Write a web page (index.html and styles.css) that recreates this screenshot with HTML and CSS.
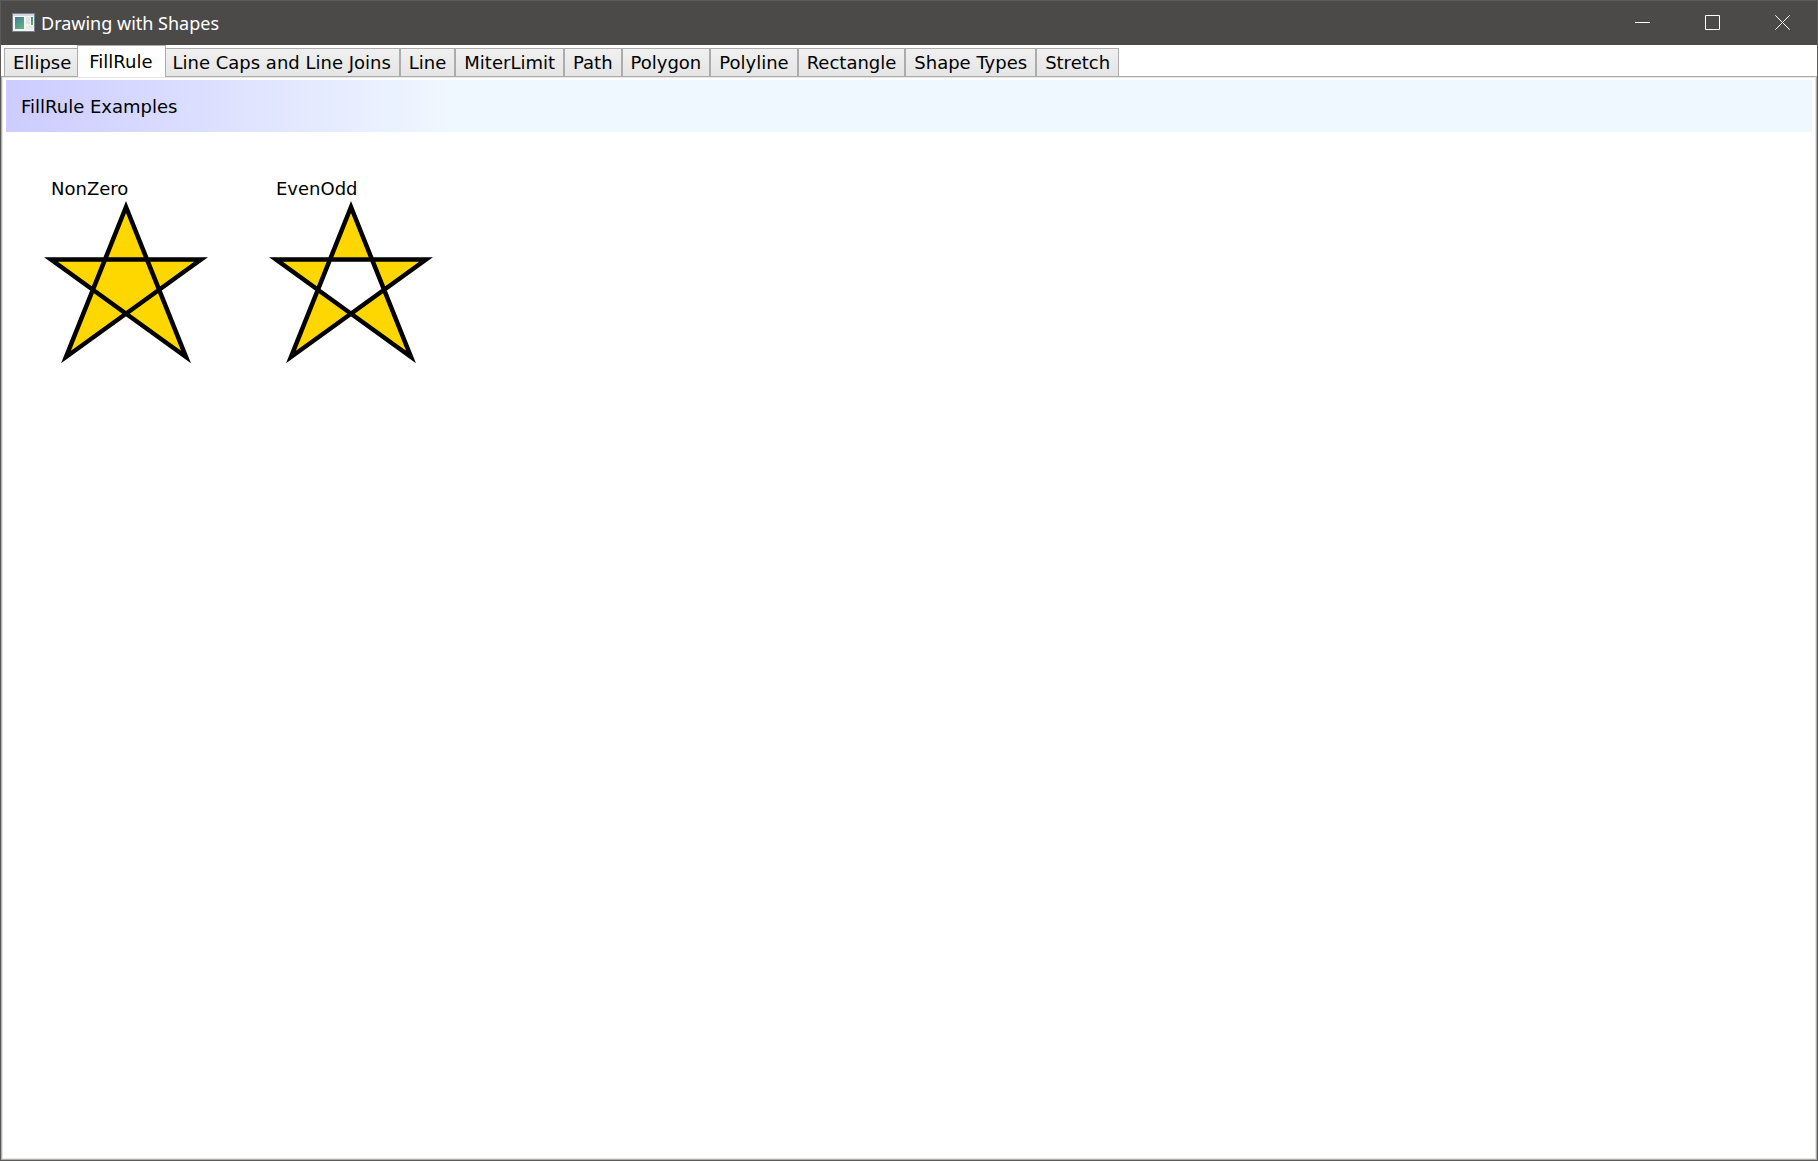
FILE: index.html
```html
<!DOCTYPE html>
<html lang="en">
<head>
<meta charset="utf-8">
<title>Drawing with Shapes</title>
<link rel="stylesheet" href="styles.css">
</head>
<body>
<div class="window">
  <header class="titlebar">
    <svg class="app-icon" width="23" height="19" viewBox="0 0 23 19" aria-hidden="true">
      <defs>
        <linearGradient id="pane" x1="0" y1="0" x2="0.6" y2="1">
          <stop offset="0" stop-color="#4177a0"/>
          <stop offset="1" stop-color="#5fb277"/>
        </linearGradient>
      </defs>
      <rect x="0.5" y="0.5" width="22" height="18" fill="#f4f4f5" stroke="#79818a"/>
      <rect x="1" y="1" width="21" height="2" fill="#d5d9df"/>
      <rect x="3" y="4" width="9" height="12" fill="url(#pane)"/>
      <rect x="14" y="4" width="4" height="7" fill="#e4e4e4"/>
      <rect x="19" y="4" width="2" height="8" fill="url(#pane)"/>
      <rect x="14" y="13" width="7" height="3" fill="#e9e9e9"/>
    </svg>
    <h1 class="title">Drawing with Shapes</h1>
    <div class="controls">
      <button class="control" type="button" aria-label="Minimize"><svg width="15" height="15" viewBox="0 0 15 15"><path d="M0 7.5H15"/></svg></button>
      <button class="control" type="button" aria-label="Maximize"><svg width="15" height="15" viewBox="0 0 15 15"><path d="M0.5 0.5H14.5V14.5H0.5Z"/></svg></button>
      <button class="control" type="button" aria-label="Close"><svg width="15" height="15" viewBox="0 0 15 15"><path d="M0.3 0.3L14.7 14.7M14.7 0.3L0.3 14.7"/></svg></button>
    </div>
  </header>
  <div class="tabs" role="tablist">
    <button class="tab" role="tab" type="button">Ellipse</button>
    <button class="tab selected" role="tab" type="button" aria-selected="true">FillRule</button>
    <button class="tab" role="tab" type="button">Line Caps and Line Joins</button>
    <button class="tab" role="tab" type="button">Line</button>
    <button class="tab" role="tab" type="button">MiterLimit</button>
    <button class="tab" role="tab" type="button">Path</button>
    <button class="tab" role="tab" type="button">Polygon</button>
    <button class="tab" role="tab" type="button">Polyline</button>
    <button class="tab" role="tab" type="button">Rectangle</button>
    <button class="tab" role="tab" type="button">Shape Types</button>
    <button class="tab" role="tab" type="button">Stretch</button>
  </div>
  <main class="panel" role="tabpanel">
    <h2 class="banner">FillRule Examples</h2>
    <div class="examples">
      <figure class="example">
        <figcaption class="caption">NonZero</figcaption>
        <svg class="star" width="150" height="150" viewBox="0 0 100 100" aria-hidden="true"><polygon fill-rule="nonzero" points="50,0 10,100 100,35 0,35 90,100"/></svg>
      </figure>
      <figure class="example">
        <figcaption class="caption">EvenOdd</figcaption>
        <svg class="star" width="150" height="150" viewBox="0 0 100 100" aria-hidden="true"><polygon fill-rule="evenodd" points="50,0 10,100 100,35 0,35 90,100"/></svg>
      </figure>
    </div>
  </main>
</div>
</body>
</html>
```
FILE: styles.css
```css
* {
  box-sizing: border-box;
}

body {
  margin: 0;
  background: #fff;
  color: #000;
  font: 18px/22px "DejaVu Sans", Verdana, sans-serif;
}

.window {
  display: flex;
  flex-direction: column;
  min-height: 100vh;
  border: 1px solid #5c5b59;
}

.titlebar {
  display: flex;
  align-items: center;
  height: 44px;
  padding: 0 0 1px 11px;
  background: #4c4a48;
  color: #fff;
}

.title {
  flex: 1;
  margin: 0 0 0 6px;
  font: 18px/24px "Noto Sans", "Open Sans", sans-serif;
}

.controls {
  display: flex;
}

.control {
  display: flex;
  align-items: center;
  justify-content: center;
  width: 70px;
  height: 43px;
  padding: 0;
  border: 0;
  background: none;
}

.control path {
  fill: none;
  stroke: #fff;
}

.tabs {
  display: flex;
  align-items: flex-end;
  height: 31px;
  padding: 0 3px;
}

.tab {
  height: 28px;
  padding: 1px 8px 0;
  border: 1px solid #acacac;
  border-bottom: 0;
  background: linear-gradient(#f0f0f0, #e5e5e5);
  color: inherit;
  font: inherit;
  white-space: nowrap;
}

.tab.selected {
  z-index: 1;
  height: 32px;
  margin: 0 -2px -1px -3px;
  padding: 0 12px 0 11px;
  background: #fff;
}

.panel {
  flex: 1;
  padding: 3px 4px 0;
  border: 1px solid #acacac;
  box-shadow: inset 0 0 0 1px #e6e6e6;
}

.banner {
  margin: 0;
  padding: 16px 15px 14px;
  background: linear-gradient(to right, #ccccff, #f0f8ff 25%);
  font: inherit;
}

.examples {
  display: flex;
  gap: 75px;
  padding: 46px 45px;
}

.example {
  width: 150px;
  margin: 0;
}

.caption {
  padding: 0 0 7px;
}

.star {
  display: block;
  overflow: visible;
}

.star polygon {
  fill: #ffd700;
  stroke: #000;
  stroke-width: 3;
  stroke-miterlimit: 10;
}
```
